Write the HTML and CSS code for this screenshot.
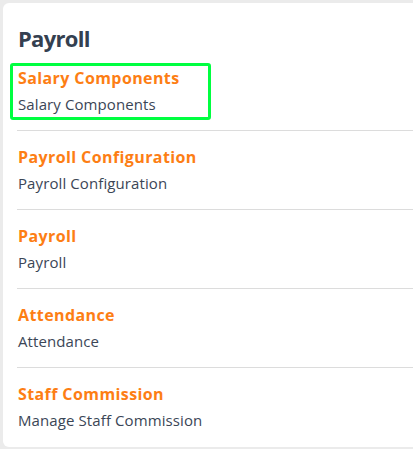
FILE: index.html
```html
<!DOCTYPE html>
<html>
<head>
<meta charset="utf-8">
<link rel="stylesheet" href="styles.css">
</head>
<body>
<div class="card">
  <h2 class="title">Payroll</h2>
  <ul class="list">
    <li class="item item-first">
      <span class="highlight"></span>
      <div class="item-title">Salary Components</div>
      <div class="item-sub">Salary Components</div>
    </li>
    <li class="item">
      <div class="item-title">Payroll Configuration</div>
      <div class="item-sub">Payroll Configuration</div>
    </li>
    <li class="item">
      <div class="item-title">Payroll</div>
      <div class="item-sub">Payroll</div>
    </li>
    <li class="item">
      <div class="item-title">Attendance</div>
      <div class="item-sub">Attendance</div>
    </li>
    <li class="item">
      <div class="item-title">Staff Commission</div>
      <div class="item-sub">Manage Staff Commission</div>
    </li>
  </ul>
</div>
</body>
</html>
```

FILE: styles.css
```css
html, body {
  margin: 0;
  padding: 0;
  height: 449px;
  overflow: hidden;
  background: #ebebeb;
  font-family: "Open Sans", "Noto Sans", sans-serif;
}
.card {
  margin: 3px 0 0 3px;
  height: 444px;
  box-sizing: border-box;
  background: #ffffff;
  border-radius: 6px 0 0 6px;
  padding: 21px 0 0 14px;
}
.title {
  margin: 0 0 0 1px;
  font-size: 22px;
  line-height: 28px;
  font-weight: 700;
  letter-spacing: -0.7px;
  color: #344050;
}
.list {
  list-style: none;
  margin: 0;
  padding: 0;
}
.item {
  position: relative;
  padding: 15px 0 16px 1px;
  border-top: 1px solid #dcdcdc;
}
.item-first {
  border-top: none;
}
.item-title {
  font-size: 16px;
  line-height: 22px;
  font-weight: 700;
  letter-spacing: 0.4px;
  color: #fd7e14;
}
.item-sub {
  margin-top: 5px;
  font-size: 15px;
  line-height: 20px;
  letter-spacing: 0.1px;
  color: #3b4656;
}
.highlight {
  position: absolute;
  left: -7px;
  top: 11px;
  width: 201px;
  height: 57px;
  box-sizing: border-box;
  border: 3px solid #00ff40;
  border-radius: 3px;
}
```
